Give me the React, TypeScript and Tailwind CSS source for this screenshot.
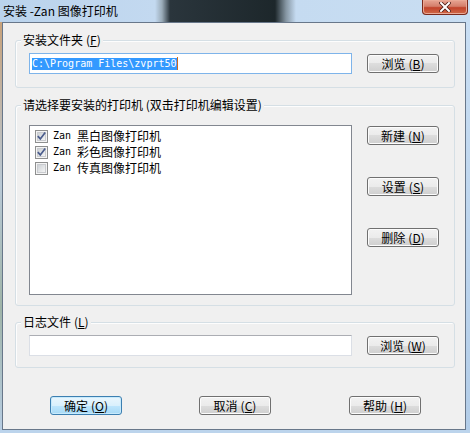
import type { ReactNode } from 'react'

const cjk = "font-['Noto_Sans_CJK_SC',sans-serif]"
const mono = "font-['DejaVu_Sans_Mono','Noto_Sans_CJK_SC',monospace]"

function Key({ k }: { k: string }) {
  return (
    <span className="ml-[3px]">
      (<span className="underline underline-offset-[1px]">{k}</span>)
    </span>
  )
}

function Button({
  label,
  k,
  primary,
  className = '',
}: {
  label: string
  k: string
  primary?: boolean
  className?: string
}) {
  const skin = primary
    ? 'border-[#3c7fb1] bg-[linear-gradient(180deg,#eaf6fd_0%,#d9f0fc_50%,#bee6fd_50%,#a7d9f5_100%)] shadow-[inset_0_0_0_1px_#c7eafc]'
    : 'border-[#707070] bg-[linear-gradient(180deg,#f2f2f2_0%,#ebebeb_50%,#dddddd_50%,#cfcfcf_100%)] shadow-[inset_0_0_0_1px_#fcfcfc]'
  return (
    <button
      type="button"
      className={`flex h-[19px] w-[72px] shrink-0 items-center justify-center rounded-[3px] border text-[12px] leading-[14px] text-black ${skin} ${className}`}
    >
      {label}
      <Key k={k} />
    </button>
  )
}

function Group({
  title,
  k,
  className = '',
  children,
}: {
  title: string
  k?: string
  className?: string
  children: ReactNode
}) {
  return (
    <div
      className={`relative ml-[12px] w-[440px] rounded-[3px] border border-[#d5dfe5] shadow-[inset_1px_1px_0_#fdfdfd] ${className}`}
    >
      <span className="absolute left-[5px] top-[-9px] bg-[#f0f0f0] px-[2px] leading-[16px]">
        {title}
        {k ? <Key k={k} /> : null}
      </span>
      {children}
    </div>
  )
}

function Check({ checked }: { checked: boolean }) {
  return (
    <span className="flex h-[13px] w-[13px] shrink-0 items-center justify-center border border-[#8e8f8f] bg-[#f4f4f4]">
      <span className="flex h-[9px] w-[9px] items-center justify-center border border-[#c9cbcf] bg-[linear-gradient(135deg,#cdd1d6,#f4f4f4)]">
        {checked ? (
          <svg width="9" height="9" viewBox="0 0 9 9" className="overflow-visible">
            <path
              d="M0.8 4.2 L3.3 6.9 L8.2 0.6"
              fill="none"
              stroke="#4a5c8c"
              strokeWidth="1.7"
            />
          </svg>
        ) : null}
      </span>
    </span>
  )
}

const printers = [
  { name: '黑白图像打印机', checked: true },
  { name: '彩色图像打印机', checked: true },
  { name: '传真图像打印机', checked: false },
]

export default function App() {
  return (
    <div
      className={`flex h-[433px] w-[470px] flex-col overflow-hidden bg-[linear-gradient(180deg,#c4daf0,#bcd4ec)] text-[12px] text-black ${cjk}`}
    >
      <div className="flex h-[22px] shrink-0 items-start bg-[linear-gradient(90deg,#bad3ec_0px,#c3d9f0_155px,#9aabb8_162px,#2a353c_170px,#1d272b_275px,#8595a2_286px,#c5dbf1_296px,#c9def2_470px)]">
        <span className="pl-[3px] pt-[3px] leading-[16px] text-black">
          安装 -Zan 图像打印机
        </span>
        <div className="ml-auto mr-[2px] flex h-[15px] w-[46px] items-center justify-center rounded-b-[4px] border border-t-0 border-[#7a2a1c] bg-[linear-gradient(180deg,#e8a593_0%,#d47f6b_45%,#c2432b_55%,#cf6a48_100%)] shadow-[inset_0_0_0_1px_#e9a996]">
          <svg width="12" height="10" viewBox="0 0 12 10">
            <path
              d="M2 1 L10 9 M10 1 L2 9"
              stroke="#4c1d16"
              strokeWidth="3.6"
              strokeLinecap="square"
            />
            <path
              d="M2 1 L10 9 M10 1 L2 9"
              stroke="#ffffff"
              strokeWidth="2"
              strokeLinecap="square"
            />
          </svg>
        </div>
      </div>

      <div className="flex">
        <div className="w-[2px] shrink-0 bg-[linear-gradient(180deg,#c8a27a,#b9c9d6_40%,#9fb4a8_70%,#b8cde2)]" />
        <div className="flex h-[408px] w-[464px] shrink-0 flex-col border border-[#68778a] bg-[#f0f0f0]">
          <Group title="安装文件夹" k="F" className="mt-[17px] h-[48px]">
            <div className="flex items-start pl-[13px] pt-[12px]">
              <div className="flex h-[21px] w-[323px] items-center border border-[#7eb4ea] bg-white pl-[2px]">
                <span
                  className={`h-[12px] bg-[#3399ff] text-[10px] leading-[12px] text-white ${mono}`}
                >
                  C:\Program Files\zvprt50
                </span>
                <span className="h-[13px] w-[1px] bg-[#cc6a1e]" />
              </div>
              <Button label="浏览" k="B" className="ml-[15px] mt-[1px]" />
            </div>
          </Group>

          <Group
            title="请选择要安装的打印机 (双击打印机编辑设置)"
            className="mt-[17px] h-[201px]"
          >
            <div className="flex items-start pl-[13px] pt-[19px]">
              <div className="h-[170px] w-[323px] border border-[#828790] bg-white pl-[5px] pt-[2px]">
                {printers.map((p) => (
                  <div key={p.name} className="flex h-[16px] items-center">
                    <Check checked={p.checked} />
                    <span className={`ml-[5px] text-[10px] leading-[16px] ${mono}`}>
                      Zan{'\u00a0'}
                    </span>
                    <span className="leading-[16px]">{p.name}</span>
                  </div>
                ))}
              </div>
              <div className="ml-[15px] mt-[1px] flex flex-col gap-[32px]">
                <Button label="新建" k="N" />
                <Button label="设置" k="S" />
                <Button label="删除" k="D" />
              </div>
            </div>
          </Group>

          <Group title="日志文件" k="L" className="mt-[16px] h-[46px]">
            <div className="flex items-start pl-[13px] pt-[12px]">
              <div className="h-[21px] w-[323px] border border-[#dbdfe6] border-t-[#abadb3] bg-white" />
              <Button label="浏览" k="W" className="ml-[15px] mt-[1px]" />
            </div>
          </Group>

          <div className="mt-[28px] flex pl-[47px]">
            <Button label="确定" k="O" primary />
            <Button label="取消" k="C" className="ml-[77px]" />
            <Button label="帮助" k="H" className="ml-[78px]" />
          </div>
        </div>
        <div className="flex-1 bg-[linear-gradient(180deg,#c9def3,#b3cde8)]" />
      </div>
    </div>
  )
}
